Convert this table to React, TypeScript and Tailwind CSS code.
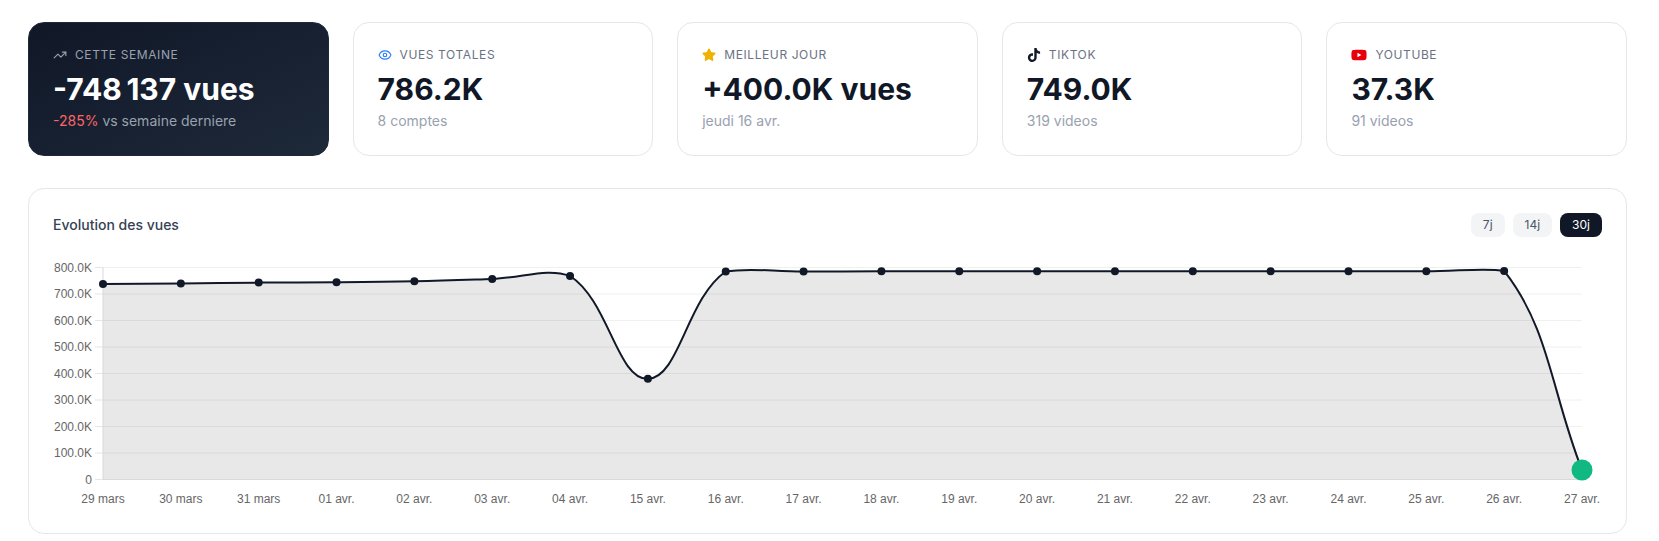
import { TrendingUp, Eye, Star } from "lucide-react";
import { SiTiktok } from "react-icons/si";
import { FaYoutube } from "react-icons/fa";

const points = [
  { label: "29 mars", v: 738000 },
  { label: "30 mars", v: 740000 },
  { label: "31 mars", v: 743000 },
  { label: "01 avr.", v: 744000 },
  { label: "02 avr.", v: 748000 },
  { label: "03 avr.", v: 757000 },
  { label: "04 avr.", v: 768000 },
  { label: "15 avr.", v: 380000 },
  { label: "16 avr.", v: 785000 },
  { label: "17 avr.", v: 785000 },
  { label: "18 avr.", v: 785500 },
  { label: "19 avr.", v: 785500 },
  { label: "20 avr.", v: 785500 },
  { label: "21 avr.", v: 785500 },
  { label: "22 avr.", v: 786000 },
  { label: "23 avr.", v: 786000 },
  { label: "24 avr.", v: 786000 },
  { label: "25 avr.", v: 786000 },
  { label: "26 avr.", v: 787000 },
  { label: "27 avr.", v: 36000 },
];

type Pt = { x: number; y: number };
type Area = { left: number; right: number; top: number; bottom: number };

const clamp = (v: number, min: number, max: number) => Math.max(Math.min(v, max), min);

// tension spline with control points kept inside the plot area
function splinePath(pts: Pt[], tension: number, area: Area) {
  const n = pts.length;
  const cps = pts.map((cur, i) => {
    const prev = pts[Math.max(0, i - 1)];
    const next = pts[Math.min(n - 1, i + 1)];
    const d01 = Math.hypot(cur.x - prev.x, cur.y - prev.y);
    const d12 = Math.hypot(next.x - cur.x, next.y - cur.y);
    const s01 = d01 / (d01 + d12) || 0;
    const s12 = d12 / (d01 + d12) || 0;
    const fa = tension * s01;
    const fb = tension * s12;
    return {
      cp1x: cur.x - fa * (next.x - prev.x),
      cp1y: cur.y - fa * (next.y - prev.y),
      cp2x: cur.x + fb * (next.x - prev.x),
      cp2y: cur.y + fb * (next.y - prev.y),
    };
  });
  cps.forEach((c) => {
    c.cp1x = clamp(c.cp1x, area.left, area.right);
    c.cp1y = clamp(c.cp1y, area.top, area.bottom);
    c.cp2x = clamp(c.cp2x, area.left, area.right);
    c.cp2y = clamp(c.cp2y, area.top, area.bottom);
  });
  let d = `M${pts[0].x},${pts[0].y}`;
  for (let i = 1; i < n; i++) {
    d += ` C${cps[i - 1].cp2x},${cps[i - 1].cp2y} ${cps[i].cp1x},${cps[i].cp1y} ${pts[i].x},${pts[i].y}`;
  }
  return d;
}

const W = 1549;
const H = 256;
const LEFT = 50;
const RIGHT = W - 20;
const Y0 = 226.5;
const YTOP = 14.5;

const ViewsChart = () => {
  const step = (RIGHT - LEFT) / (points.length - 1);
  const pts = points.map((p, i) => ({
    x: LEFT + i * step,
    y: Y0 - (p.v / 800000) * (Y0 - YTOP),
  }));
  const line = splinePath(pts, 0.4, { left: LEFT, right: RIGHT, top: YTOP, bottom: Y0 });
  const area = `${line} L${RIGHT},${Y0} L${LEFT},${Y0} Z`;
  const ticks = [0, 1, 2, 3, 4, 5, 6, 7, 8];
  const last = points.length - 1;

  return (
    <svg
      width="100%"
      height={H}
      viewBox={`0 0 ${W} ${H}`}
      className="mt-4 block font-['Liberation_Sans',Arial,sans-serif]"
    >
      {ticks.map((t) => {
        const y = Y0 - (t / 8) * (Y0 - YTOP);
        return (
          <g key={t}>
            <line x1={LEFT} x2={RIGHT} y1={y} y2={y} stroke="#f0f0f0" />
            <line x1={LEFT - 8} x2={LEFT} y1={y} y2={y} stroke="#e5e5e5" />
            <text x={LEFT - 11} y={y + 4} textAnchor="end" fontSize="12" fill="#666">
              {t === 0 ? "0" : `${t}00.0K`}
            </text>
          </g>
        );
      })}

      <path d={area} fill="#1a1a1a" fillOpacity={0.1} />
      <line x1={LEFT} x2={LEFT} y1={YTOP} y2={Y0} stroke="#d9d9d9" />
      <line x1={LEFT} x2={RIGHT} y1={Y0} y2={Y0} stroke="#d9d9d9" />
      <path d={line} fill="none" stroke="#111827" strokeWidth={2} />

      {pts.map((p, i) =>
        i === last ? null : <circle key={i} cx={p.x} cy={p.y} r={4} fill="#111827" />
      )}
      <circle cx={pts[last].x} cy={pts[last].y} r={10.5} fill="#10b981" />

      {points.map((p, i) => (
        <text key={p.label} x={pts[i].x} y={Y0 + 23} textAnchor="middle" fontSize="12" fill="#666">
          {p.label}
        </text>
      ))}
    </svg>
  );
};

const StatCard = ({
  icon,
  label,
  value,
  sub,
}: {
  icon: React.ReactNode;
  label: string;
  value: string;
  sub: string;
}) => (
  <div className="rounded-2xl border border-gray-200 bg-white p-6">
    <div className="flex items-center gap-2 text-xs uppercase tracking-wider text-gray-500">
      {icon}
      <span>{label}</span>
    </div>
    <div className="mt-2 text-3xl font-bold text-gray-900">{value}</div>
    <div className="mt-1 text-sm text-gray-400">{sub}</div>
  </div>
);

export default function App() {
  return (
    <div className="min-h-screen bg-white pl-7 pr-8 pt-[22px] font-['Inter',sans-serif]">
      <div className="grid grid-cols-5 gap-6">
        {/* This week */}
        <div className="rounded-2xl border border-gray-800 bg-gradient-to-br from-gray-900 to-gray-800 p-6">
          <div className="flex items-center gap-2 text-xs uppercase tracking-wider text-gray-400">
            <TrendingUp className="h-3.5 w-3.5" />
            <span>Cette semaine</span>
          </div>
          <div className="mt-2 text-3xl font-bold text-white">-748{"\u202f"}137 vues</div>
          <div className="mt-1 text-sm text-gray-400">
            <span className="text-red-400">-285%</span> vs semaine derniere
          </div>
        </div>

        <StatCard
          icon={<Eye className="h-3.5 w-3.5 text-blue-500" />}
          label="Vues totales"
          value="786.2K"
          sub="8 comptes"
        />
        <StatCard
          icon={<Star className="h-3.5 w-3.5 fill-yellow-500 text-yellow-500" />}
          label="Meilleur jour"
          value="+400.0K vues"
          sub="jeudi 16 avr."
        />
        <StatCard
          icon={<SiTiktok className="h-3.5 w-3.5 text-gray-900" />}
          label="TikTok"
          value="749.0K"
          sub="319 videos"
        />
        <StatCard
          icon={<FaYoutube className="h-4 w-4 text-red-600" />}
          label="YouTube"
          value="37.3K"
          sub="91 videos"
        />
      </div>

      {/* Chart */}
      <div className="mt-8 rounded-2xl border border-gray-200 bg-white p-6">
        <div className="flex items-center justify-between">
          <h3 className="text-sm font-medium text-gray-700">Evolution des vues</h3>
          <div className="flex items-center gap-2">
            <button className="rounded-lg bg-gray-100 px-3 py-1 text-xs text-gray-600">7j</button>
            <button className="rounded-lg bg-gray-100 px-3 py-1 text-xs text-gray-600">14j</button>
            <button className="rounded-lg bg-gray-900 px-3 py-1 text-xs text-white">30j</button>
          </div>
        </div>
        <ViewsChart />
      </div>
    </div>
  );
}
